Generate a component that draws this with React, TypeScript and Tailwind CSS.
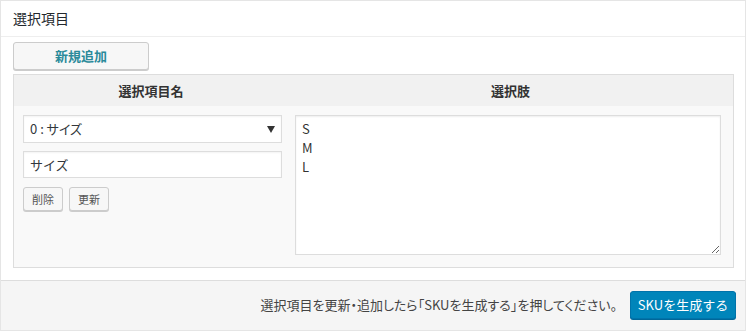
import React from 'react';

const font = { fontFamily: '"Noto Sans CJK JP", "Noto Sans", sans-serif' };

const App: React.FC = () => {
  return (
    <div className="w-[746px] h-[331px] bg-white text-[13px] text-[#32373c]" style={font}>
      <div className="h-[331px] border border-[#e5e5e5] flex flex-col">
        {/* Box title */}
        <div className="h-[36px] shrink-0 border-b border-[#eeeeee] px-[12px] flex items-center text-[14px] text-[#23282d]">
          選択項目
        </div>

        <div className="px-[12px] pt-[5px] pb-[12px]">
          <button className="w-[136px] h-[28px] border border-[#cccccc] rounded-[3px] bg-[#f7f7f7] font-bold text-[13px] text-[#2a8a9a] shadow-[0_1px_0_#cccccc]">
            新規追加
          </button>

          <div className="mt-[4px] w-[721px] border border-[#dddddd] bg-[#f9f9f9]">
            <div className="h-[31px] bg-[#f1f1f1] flex items-center font-bold text-[#333333]">
              <div className="w-[274px] text-center">選択項目名</div>
              <div className="flex-1 text-center">選択肢</div>
            </div>

            <div className="flex gap-[13px] pl-[9px] pt-[9px] pb-[12px]">
              <div className="w-[259px] flex flex-col">
                <div className="h-[28px] border border-[#dddddd] bg-white flex items-center justify-between pl-[6px] pr-[6px] shadow-[inset_0_1px_2px_rgba(0,0,0,0.05)]">
                  <span className="[font-feature-settings:'palt']">0 : サイズ</span>
                  <span className="w-0 h-0 border-l-[4px] border-r-[4px] border-t-[7px] border-l-transparent border-r-transparent border-t-[#333333]" />
                </div>
                <div className="mt-[8px] h-[27px] border border-[#dddddd] bg-white flex items-center px-[6px] shadow-[inset_0_1px_2px_rgba(0,0,0,0.05)]">
                  サイズ
                </div>
                <div className="mt-[9px] flex gap-[6px]">
                  <button className="w-[40px] h-[24px] border border-[#cccccc] rounded-[3px] bg-[#f7f7f7] text-[11px] text-[#555555] shadow-[0_1px_0_#cccccc]">
                    削除
                  </button>
                  <button className="w-[40px] h-[24px] border border-[#cccccc] rounded-[3px] bg-[#f7f7f7] text-[11px] text-[#555555] shadow-[0_1px_0_#cccccc]">
                    更新
                  </button>
                </div>
              </div>

              <textarea
                readOnly
                defaultValue={'S\nM\nL'}
                className="w-[426px] h-[140px] border border-[#dddddd] bg-white px-[6px] py-[3px] text-[13px] leading-[19px] text-[#333333] outline-none shadow-[inset_0_1px_2px_rgba(0,0,0,0.07)]"
                style={font}
              />
            </div>
          </div>
        </div>

        {/* Footer */}
        <div className="flex-1 border-t border-[#dddddd] bg-[#f5f5f5] flex items-start justify-end gap-[13px] pt-[10px] pr-[9px]">
          <span className="h-[28px] flex items-center text-[#444444] [font-feature-settings:'palt']">
            選択項目を更新・追加したら「SKUを生成する」を押してください。
          </span>
          <button className="w-[106px] h-[28px] rounded-[3px] bg-[#0085ba] border border-[#0073aa] text-white text-[13px] shadow-[0_1px_0_#006799]">
            SKUを生成する
          </button>
        </div>
      </div>
    </div>
  );
};

export default App;
